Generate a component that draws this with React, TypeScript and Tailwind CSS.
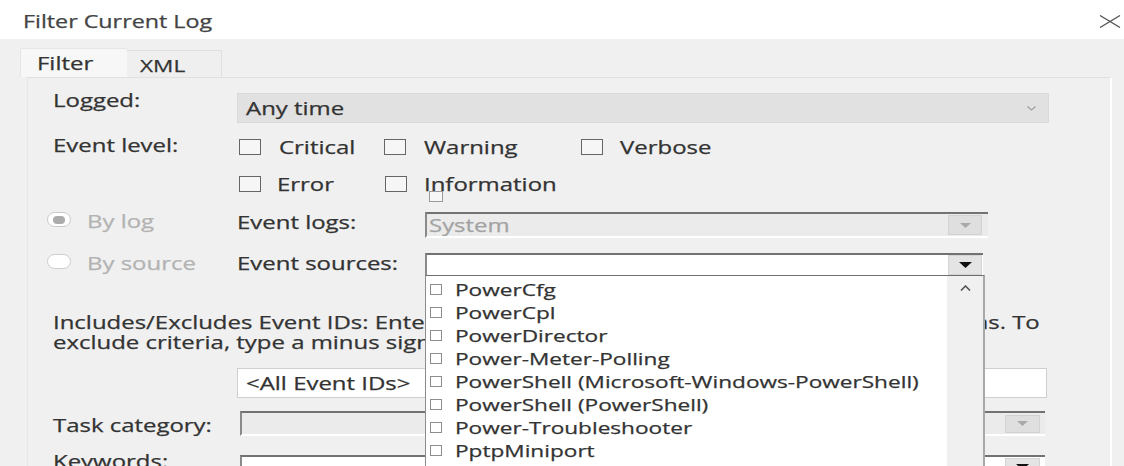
import React from "react";

// Wide text run: the dialog's type is rendered with a horizontally stretched face.
const W = ({
  children,
  right = false,
}: {
  children: React.ReactNode;
  right?: boolean;
}) => (
  <span
    className={
      right
        ? "inline-block origin-right scale-x-[1.33] whitespace-nowrap"
        : "inline-block origin-left scale-x-[1.33] whitespace-nowrap"
    }
  >
    {children}
  </span>
);

const Box = () => (
  <span className="block w-[22px] h-[16px] border-[1.5px] border-[#666] bg-[#f6f6f6]" />
);

const TriDown = ({ dark }: { dark?: boolean }) =>
  dark ? (
    <svg width="13" height="6" viewBox="0 0 13 6">
      <polygon points="0,0 13,0 6.5,6" fill="#111" />
    </svg>
  ) : (
    <svg width="11" height="5" viewBox="0 0 11 5">
      <polygon points="0,0 11,0 5.5,5" fill="#a9a9a9" />
    </svg>
  );

const sources = [
  "PowerCfg",
  "PowerCpl",
  "PowerDirector",
  "Power-Meter-Polling",
  "PowerShell (Microsoft-Windows-PowerShell)",
  "PowerShell (PowerShell)",
  "Power-Troubleshooter",
  "PptpMiniport",
  "PrintService",
];

export default function App() {
  return (
    <div className="w-[1124px] h-[466px] overflow-hidden bg-white font-['Open_Sans','Noto_Sans',sans-serif] text-[18px] text-[#333] [-webkit-text-stroke:0.25px]">
      {/* Title bar */}
      <div className="h-[39px] flex items-start justify-between pl-[23px] pr-[3px] pt-[9px]">
        <span className="text-[17.5px] leading-[24px] text-[#444]">
          <W>Filter Current Log</W>
        </span>
        <svg width="22" height="13" viewBox="0 0 22 13" className="mt-[6px]">
          <path d="M1 0.5 L21 12.5 M21 0.5 L1 12.5" stroke="#555" strokeWidth="1.3" fill="none" />
        </svg>
      </div>

      {/* Dialog body */}
      <div className="h-[427px] bg-[#f0f0f0] pl-[20px] pr-[12px] pt-[9px]">
        {/* Tabs */}
        <div className="flex items-end h-[29px]">
          <div className="w-[107px] h-[29px] bg-[#f7f7f7] border-t border-l border-[#e6e6e6] pl-[16px] leading-[28px]">
            <W>Filter</W>
          </div>
          <div className="w-[95px] h-[27px] bg-[#efefef] border-t border-r border-[#e0e0e0] pl-[13px] leading-[30px] text-[17px] font-medium">
            <W>XML</W>
          </div>
        </div>

        {/* Tab panel */}
        <div className="relative ml-[7px] h-[400px] border-t border-l border-r-2 border-t-[#e0e0e0] border-l-[#e6e6e6] border-r-white bg-[#f0f0f0] pt-[10px]">
          {/* Logged */}
          <div className="flex items-start pl-[25px] h-[35px]">
            <div className="w-[184px] leading-[24px]">
              <W>Logged:</W>
            </div>
            <div className="mt-[5px] w-[812px] h-[30px] bg-[#e1e1e1] border border-[#dadada] flex items-center pl-[8px] pr-[12px]">
              <span className="leading-[24px]">
                <W>Any time</W>
              </span>
              <svg width="9" height="5" viewBox="0 0 9 5" className="ml-auto">
                <polyline points="0.5,0.5 4.5,4 8.5,0.5" stroke="#a0a0a0" strokeWidth="1.2" fill="none" />
              </svg>
            </div>
          </div>

          {/* Event level */}
          <div className="flex items-start pl-[25px] mt-[10px]">
            <div className="w-[184px] leading-[24px]">
              <W>Event level:</W>
            </div>
            <div className="ml-[2px] flex flex-col gap-[9px]">
              <div className="flex h-[28px] items-center">
                <div className="w-[145px] flex items-center gap-[18px]">
                  <Box />
                  <span><W>Critical</W></span>
                </div>
                <div className="w-[197px] flex items-center gap-[18px]">
                  <Box />
                  <span><W>Warning</W></span>
                </div>
                <div className="flex items-center gap-[17px]">
                  <Box />
                  <span><W>Verbose</W></span>
                </div>
              </div>
              <div className="flex h-[28px] items-center">
                <div className="w-[146px] flex items-center gap-[16px]">
                  <Box />
                  <span><W>Error</W></span>
                </div>
                <div className="flex items-center gap-[17px]">
                  <Box />
                  <span className="relative">
                    <W>Information</W>
                    <span className="absolute left-[5px] top-[20px] w-[14px] h-[11px] border border-[#9a9a9a] bg-[#f7f7f7]" />
                  </span>
                </div>
              </div>
            </div>
          </div>

          {/* By log */}
          <div className="flex items-start pl-[19px] mt-[14px]">
            <div className="w-[190px] flex items-start">
              <span className="w-[24px] h-[15px] rounded-full border border-[#c8c8c8] bg-white flex items-center justify-center">
                <span className="w-[12px] h-[8px] rounded-full bg-[#acacac]" />
              </span>
              <span className="ml-[16px] leading-[18px] text-[#b3b3b3]">
                <W>By log</W>
              </span>
            </div>
            <div className="w-[188px] leading-[20px]">
              <W>Event logs:</W>
            </div>
            <div className="w-[563px] h-[26px] bg-[#ebebeb] border-t-2 border-l-2 border-b-2 border-t-[#727272] border-l-[#8a8a8a] border-b-white flex items-center pl-[2px] pr-[6px]">
              <span className="leading-[20px] text-[#a3a3a3]">
                <W>System</W>
              </span>
              <span className="ml-auto w-[34px] h-[20px] bg-[#dfdfdf] border border-[#d2d2d2] flex items-center justify-center">
                <TriDown />
              </span>
            </div>
          </div>

          {/* By source */}
          <div className="relative z-10 flex items-start pl-[19px] mt-[15px]">
            <div className="w-[190px] flex items-start">
              <span className="mt-[1px] w-[24px] h-[15px] rounded-full border border-[#cdcdcd] bg-white" />
              <span className="ml-[16px] leading-[20px] text-[#b3b3b3]">
                <W>By source</W>
              </span>
            </div>
            <div className="w-[188px] leading-[20px]">
              <W>Event sources:</W>
            </div>
            <div className="relative w-[558px] h-[22px] bg-white border-t-2 border-l-2 border-t-[#727272] border-l-[#8a8a8a] flex items-center justify-end pr-[1px]">
              <span className="w-[34px] h-[20px] bg-[#e4e4e4] border border-[#d4d4d4] flex items-center justify-center">
                <TriDown dark />
              </span>

              {/* Open source list */}
              <div className="absolute left-[-2px] top-full w-[560px] h-[200px] bg-white border-t border-l border-r-2 border-t-[#6f6f6f] border-l-[#8c8c8c] border-r-[#a9a9a9] flex text-[17px]">
                <div className="flex-1 pt-[2px]">
                  {sources.map((s) => (
                    <div key={s} className="h-[23px] flex items-center pl-[4px]">
                      <span className="w-[12px] h-[11px] border border-[#8d8d8d] bg-white" />
                      <span className="ml-[13px] leading-[23px]">
                        <W>{s}</W>
                      </span>
                    </div>
                  ))}
                </div>
                <div className="w-[36px] bg-[#f0f0f0] flex justify-center pt-[9px]">
                  <svg width="11" height="6" viewBox="0 0 11 6">
                    <polyline points="1,5.5 5.5,1 10,5.5" stroke="#555" strokeWidth="1.6" fill="none" />
                  </svg>
                </div>
              </div>
            </div>
          </div>

          {/* Event ID help */}
          <div className="pl-[25px] mt-[37px] leading-[20px]">
            <div className="w-[987px] flex justify-between">
              <W>Includes/Excludes Event IDs: Enter ID numbers and/or</W>
              <W right>ID ranges separated by commas. To</W>
            </div>
            <div>
              <W>exclude criteria, type a minus sign first. For example 1,3,5-99,-76</W>
            </div>
          </div>

          {/* Event IDs input */}
          <div className="pl-[209px] mt-[16px]">
            <div className="w-[810px] h-[30px] bg-white border border-[#cfcfcf] flex items-center pl-[8px]">
              <span className="leading-[24px]">
                <W>&lt;All Event IDs&gt;</W>
              </span>
            </div>
          </div>

          {/* Task category */}
          <div className="flex items-start pl-[25px] mt-[13px]">
            <div className="w-[187px] leading-[28px]">
              <W>Task category:</W>
            </div>
            <div className="w-[805px] h-[25px] bg-[#ebebeb] border-t-2 border-l-2 border-b-2 border-t-[#727272] border-l-[#8a8a8a] border-b-white flex items-center justify-end pr-[5px]">
              <span className="w-[35px] h-[18px] bg-[#dfdfdf] border border-[#d2d2d2] flex items-center justify-center">
                <TriDown />
              </span>
            </div>
          </div>

          {/* Keywords */}
          <div className="flex items-start pl-[25px] mt-[16px]">
            <div className="w-[187px] leading-[12px]">
              <W>Keywords:</W>
            </div>
            <div className="w-[805px] h-[25px] bg-white border-t-2 border-l-2 border-t-[#727272] border-l-[#8a8a8a] flex items-start justify-end pr-[5px] pt-[1px]">
              <span className="w-[35px] h-[18px] bg-[#e4e4e4] border border-[#d4d4d4] flex items-center justify-center">
                <TriDown dark />
              </span>
            </div>
          </div>
        </div>
      </div>
    </div>
  );
}
